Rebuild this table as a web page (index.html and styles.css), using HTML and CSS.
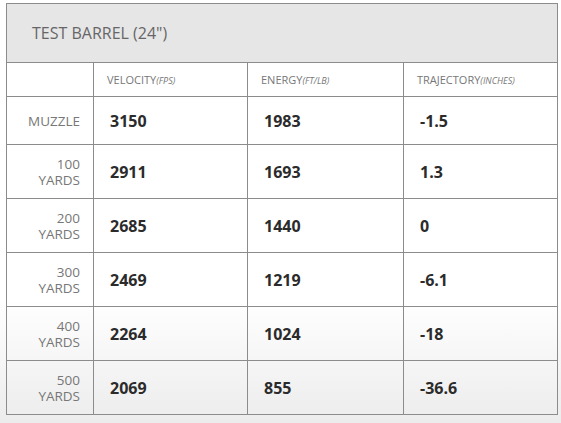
FILE: index.html
```html
<!DOCTYPE html>
<html>
<head>
<meta charset="utf-8">
<link rel="stylesheet" href="styles.css">
</head>
<body>
<table class="ballistics">
  <colgroup>
    <col class="c-label">
    <col class="c-vel">
    <col class="c-en">
    <col class="c-traj">
  </colgroup>
  <thead>
    <tr class="title-row"><th colspan="4" class="title">TEST BARREL (24")</th></tr>
    <tr class="head-row">
      <th></th>
      <th class="colhead">VELOCITY<em>(FPS)</em></th>
      <th class="colhead">ENERGY<em>(FT/LB)</em></th>
      <th class="colhead">TRAJECTORY<em>(INCHES)</em></th>
    </tr>
  </thead>
  <tbody>
    <tr class="row-first"><td class="label">MUZZLE</td><td class="val">3150</td><td class="val">1983</td><td class="val">-1.5</td></tr>
    <tr class="row"><td class="label"><span class="ln">100</span><span class="ln">YARDS</span></td><td class="val">2911</td><td class="val">1693</td><td class="val">1.3</td></tr>
    <tr class="row"><td class="label"><span class="ln">200</span><span class="ln">YARDS</span></td><td class="val">2685</td><td class="val">1440</td><td class="val">0</td></tr>
    <tr class="row"><td class="label"><span class="ln">300</span><span class="ln">YARDS</span></td><td class="val">2469</td><td class="val">1219</td><td class="val">-6.1</td></tr>
    <tr class="row"><td class="label"><span class="ln">400</span><span class="ln">YARDS</span></td><td class="val">2264</td><td class="val">1024</td><td class="val">-18</td></tr>
    <tr class="row"><td class="label"><span class="ln">500</span><span class="ln">YARDS</span></td><td class="val">2069</td><td class="val">855</td><td class="val">-36.6</td></tr>
  </tbody>
</table>
</body>
</html>
```
FILE: styles.css
```css
html, body {
  margin: 0;
  padding: 0;
}
body {
  min-height: 423px;
  background: linear-gradient(to bottom, #ffffff 0, #ffffff 300px, #ececec 423px);
  font-family: "Open Sans", "DejaVu Sans", sans-serif;
  padding: 3px 0 0 6px;
  box-sizing: border-box;
}
.ballistics {
  border-collapse: collapse;
  table-layout: fixed;
  width: 551px;
}
.ballistics th, .ballistics td {
  border: 1px solid #8c8c8c;
  padding: 0;
}
.c-label { width: 87px; }
.c-vel { width: 154px; }
.c-en { width: 156px; }
.c-traj { width: 154px; }

.title-row { height: 59px; }
.title {
  background: #e6e6e6;
  text-align: left;
  font-weight: normal;
  font-size: 16px;
  color: #666;
  padding-left: 25px !important;
}
.head-row { height: 34px; }
.colhead {
  text-align: left;
  font-weight: normal;
  font-size: 11px;
  color: #777;
  padding-left: 13px !important;
}
.colhead em {
  font-size: 9px;
  font-style: italic;
}
.row-first { height: 48px; }
.row { height: 54px; }
.label {
  text-align: right;
  font-size: 13.5px;
  line-height: 16px;
  color: #777;
  padding-right: 13px !important;
}
.label .ln {
  display: block;
  line-height: 16px;
}
.val {
  font-size: 16px;
  font-weight: bold;
  color: #2b2b2b;
  padding-left: 16px !important;
}
```
